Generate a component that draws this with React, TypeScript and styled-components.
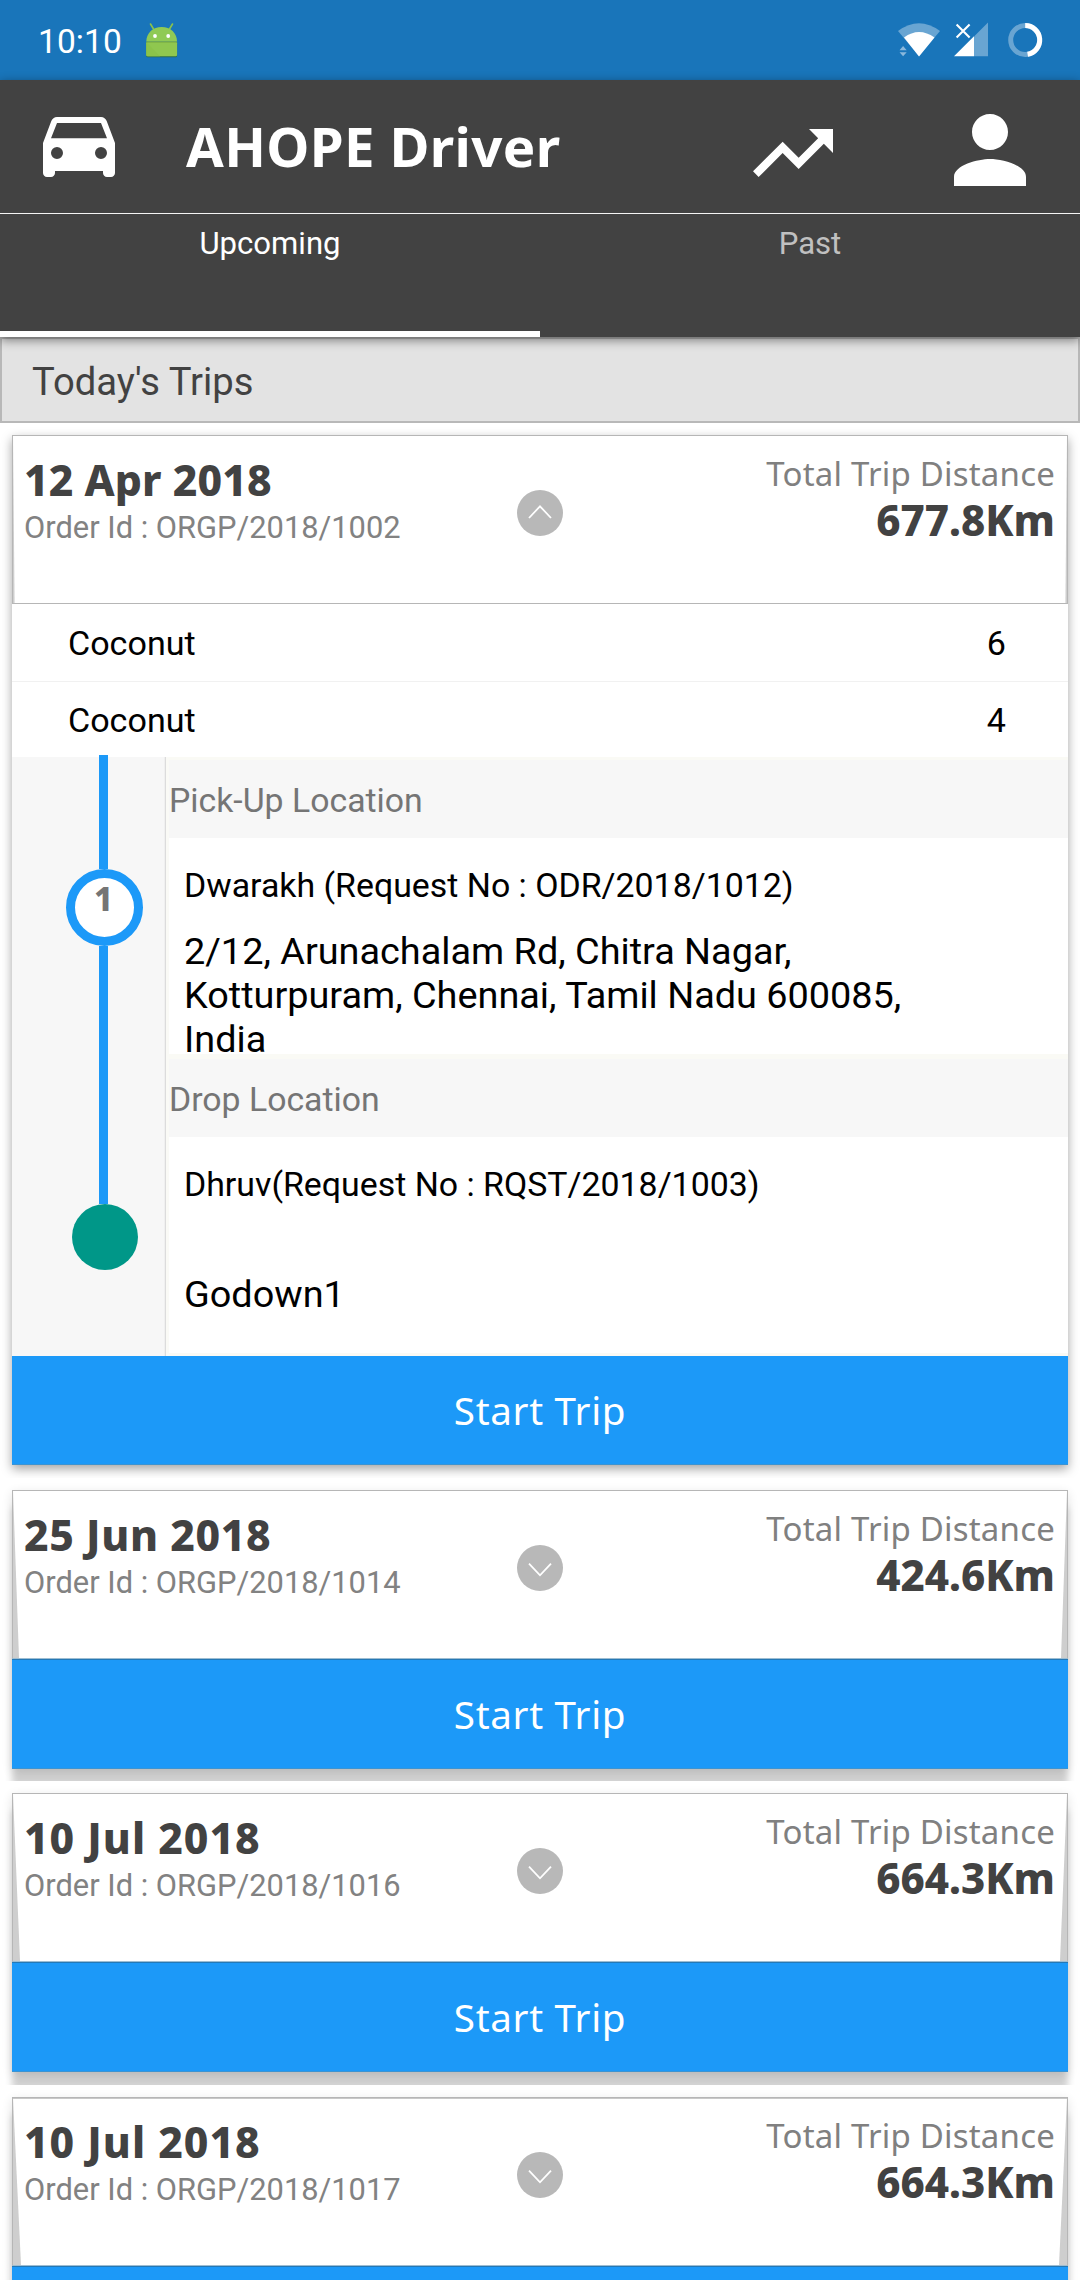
import React from "react";
import styled, { createGlobalStyle } from "styled-components";

const BLUE = "#1c99f8";
const DARK = "#424242";
const ROBOTO = `Roboto, "Liberation Sans", sans-serif`;
const HUMANIST = `"Noto Sans", "Open Sans", sans-serif`;

const GlobalStyle = createGlobalStyle`
  * { box-sizing: border-box; }
  body { margin: 0; background: #fff; font-family: ${ROBOTO}; }
  svg { display: block; flex: none; }
`;

const Screen = styled.div`
  width: 1080px;
  height: 2280px;
  overflow: hidden;
  background: #fff;
  display: flex;
  flex-direction: column;
`;

/* ---------- status bar ---------- */

const StatusBar = styled.div`
  flex: none;
  height: 80px;
  background: #1975ba;
  display: flex;
  align-items: flex-start;
  padding: 22px 37px 0 38px;
`;

const Clock = styled.span`
  color: #fff;
  font-size: 33.5px;
  line-height: 40px;
  letter-spacing: 0.1px;
  margin-right: 23px;
`;

const StatusIcons = styled.div`
  margin-left: auto;
  display: flex;
  gap: 14px;
`;

const RingSlot = styled.span`
  margin-left: 6px;
`;

/* ---------- app header ---------- */

const AppTop = styled.header`
  flex: none;
  position: relative;
  z-index: 1;
  background: ${DARK};
  box-shadow: 0 3px 10px rgba(0, 0, 0, 0.48);
`;

const Toolbar = styled.div`
  height: 134px;
  border-bottom: 1px solid #f4f4f4;
  display: flex;
  align-items: flex-start;
  padding: 0 36px 0 43px;
`;

const IconSlot = styled.span<{ $top: number; $left?: string }>`
  padding-top: ${(p) => p.$top}px;
  margin-left: ${(p) => p.$left ?? "0"};
`;

const Title = styled.h1`
  margin: 0 0 0 71px;
  color: #fff;
  font: 700 54.6px/133px ${HUMANIST};
  letter-spacing: 0.35px;
  white-space: nowrap;
`;

const Tabs = styled.nav`
  display: grid;
  grid-template-columns: 1fr 1fr;
  height: 123px;
`;

const Tab = styled.div<{ $active?: boolean }>`
  text-align: center;
  font-size: 31.1px;
  line-height: 59px;
  color: ${(p) => (p.$active ? "#fff" : "#c0c0c0")};
  border-bottom: 6px solid ${(p) => (p.$active ? "#fff" : "transparent")};
`;

const SectionTitle = styled.h2`
  flex: none;
  margin: 0;
  height: 86px;
  border: 2px solid #b8b8b8;
  background: #e3e3e3;
  color: ${DARK};
  font: 400 38.2px/82px ${ROBOTO};
  padding: 2px 0 0 30px;
`;

/* ---------- trip cards ---------- */

const CardSlot = styled.div<{ $tail: number }>`
  flex: none;
  padding: 12px 12px ${(p) => p.$tail}px;
  overflow: hidden;
`;

const Card = styled.article<{ $deep: boolean }>`
  background: #fff;
  box-shadow: ${(p) =>
    p.$deep
      ? "0 3px 10px rgba(0,0,0,.12), 0 18px 7px rgba(0,0,0,.18)"
      : "0 4px 10px rgba(0,0,0,.36)"};
`;

const CardHead = styled.div<{ $wedge: number; $open: boolean; $topLine: number }>`
  position: relative;
  height: 169px;
  border: 1px solid #b6b6b6;
  border-bottom-color: ${(p) => (p.$open ? "#b6b6b6" : "#9dbdd2")};
  box-shadow: inset 0 ${(p) => p.$topLine}px #c8c8c8;
  display: grid;
  grid-template-columns: 1fr 46px 1fr;
  padding: 0 12px 0 11px;

  &::before,
  &::after {
    content: "";
    position: absolute;
    top: 0;
    bottom: 0;
    width: ${(p) => p.$wedge}px;
    background: #cecece;
  }
  &::before {
    left: 0;
    clip-path: polygon(0 0, 100% 100%, 0 100%);
  }
  &::after {
    right: 0;
    clip-path: polygon(100% 0, 100% 100%, 0 100%);
  }
`;

const HeadLeft = styled.div`
  padding-top: 21px;
`;

const HeadRight = styled.div`
  padding-top: 18px;
  text-align: right;
`;

const TripDate = styled.div<{ $track: number }>`
  font: 800 42.6px/44px ${HUMANIST};
  letter-spacing: ${(p) => p.$track}px;
  color: ${DARK};
  white-space: nowrap;
`;

const OrderId = styled.div`
  margin-top: 9px;
  font-size: 30.85px;
  line-height: 36px;
  color: #828282;
  white-space: nowrap;
`;

const DistanceLabel = styled.div`
  font: 400 33px/40px ${HUMANIST};
  letter-spacing: 0.2px;
  color: #808080;
  white-space: nowrap;
`;

const Distance = styled.div`
  margin-top: 4px;
  font: 800 42px/44px ${HUMANIST};
  color: ${DARK};
`;

const ToggleButton = styled.span`
  margin-top: 54px;
  width: 46px;
  height: 46px;
  border-radius: 50%;
  background: #b8b8b8;
`;

const StartButton = styled.div<{ $collapsed: boolean }>`
  height: ${(p) => (p.$collapsed ? 110 : 109)}px;
  background: ${BLUE};
  border-top: ${(p) => (p.$collapsed ? "1px solid #2478b6" : "0")};
  box-shadow: inset 0 -1px #3c94d2;
  color: #fff;
  font: 400 38.6px/109px ${HUMANIST};
  letter-spacing: 0.65px;
  text-align: center;
`;

const ProductRow = styled.div`
  display: flex;
  justify-content: space-between;
  height: 77px;
  padding: 1px 62px 0 56px;
  font-size: 34.1px;
  line-height: 76px;
  color: #000;

  & + & {
    height: 76px;
    box-shadow: inset 0 1px #f1f1f1;
  }
`;

/* ---------- route ---------- */

const Route = styled.div`
  display: grid;
  grid-template-columns: 154px 1fr;
  height: 599px;
`;

const Timeline = styled.div`
  display: flex;
  flex-direction: column;
  align-items: center;
  background: #f7f7f7;
  border-right: 1px solid #dcdcdc;
  padding-left: 32px;
  box-shadow: inset -1px 0 #f0f0f0;
`;

const Segment = styled.span<{ $length: number; $rise?: number }>`
  width: 9px;
  height: ${(p) => p.$length}px;
  margin-top: ${(p) => -(p.$rise ?? 0)}px;
  margin-right: 2px;
  background: ${BLUE};
`;

const StopNumber = styled.span`
  width: 77px;
  height: 77px;
  border: 9px solid ${BLUE};
  border-radius: 50%;
  background: #fff;
  color: #757575;
  font: 800 33px/41px ${HUMANIST};
  text-align: center;
  padding-right: 2px;
`;

const EndDot = styled.span`
  width: 66px;
  height: 66px;
  margin-left: 1px;
  border-radius: 50%;
  background: #009788;
`;

const Stops = styled.div`
  display: flex;
  flex-direction: column;
  border-left: 3px solid #fafaf6;
`;

const Stop = styled.section`
  border-top: 3px solid #fafaf5;
  border-bottom: 3px solid #fafaf5;

  & + & {
    border-top-width: 2px;
  }
`;

const StopTitle = styled.h3`
  margin: 0;
  height: 78px;
  background: #f7f7f7;
  color: #757575;
  font: 400 33.8px/78px ${ROBOTO};
  padding-top: 2px;
`;

const StopBody = styled.div`
  height: 216px;
  padding: 28px 0 0 15px;
  color: #000;
`;

const Requester = styled.div`
  font-size: 33.87px;
  line-height: 40px;
  white-space: nowrap;
`;

const Address = styled.div<{ $gap: number }>`
  margin-top: ${(p) => p.$gap}px;
  width: 740px;
  font-size: 37.85px;
  line-height: 44px;
`;

/* ---------- icons ---------- */

const Droid = () => (
  <svg width="34" height="36" viewBox="0 0 34 36">
    <path d="M5.500 2l3 5M27.500 2l-3 5" stroke="#8bc34a" strokeWidth="1.600" strokeLinecap="round" />
    <path d="M1.300 19.500C1.300 11 8 5 16.700 5S32 11 32 19.500z" fill="#8fca55" />
    <rect x="1.300" y="20" width="30.800" height="15.300" rx="1.500" fill="#33691e" opacity=".7" />
    <rect x="1.300" y="19.700" width="30.800" height="14.600" rx="1.500" fill="#8fc74f" />
    <path d="M1.300 20L15 34.300H2.500a1.200 1.200 0 0 1-1.200-1.200z" fill="#8bc34a" />
    <path d="M1.300 20h30.800" stroke="#78ab42" strokeWidth="1.200" />
    <ellipse cx="10" cy="14" rx="1.900" ry="2.100" fill="#fff" />
    <ellipse cx="23.200" cy="14" rx="1.900" ry="2.100" fill="#fff" />
  </svg>
);

const Wifi = () => (
  <svg width="42" height="36" viewBox="0 0 42 36">
    <path d="M0 9Q21-6.500 42 9L21 34z" fill="#fff" opacity=".35" />
    <path d="M6 15.500Q21 4.500 36.500 15.500L21 34.500z" fill="#fff" />
    <path d="M1.500 28.200h7.200L5.100 24zM1.500 30.200h7.200L5.100 34.300z" fill="#8ab8dc" />
  </svg>
);

const Signal = () => (
  <svg width="34" height="36" viewBox="0 0 34 36">
    <path d="M20 14.500L34 .5v33.700H20z" fill="#fff" opacity=".35" />
    <path d="M0 34.200L20 14.200v20z" fill="#fff" />
    <path d="M2.600 2.600l13 13M15.600 2.600l-13 13" stroke="#fff" strokeWidth="2.100" />
  </svg>
);

const BatteryRing = () => (
  <svg width="35" height="36" viewBox="0 0 35 36">
    <circle cx="17.200" cy="18" r="14.500" fill="none" stroke="#fff" strokeOpacity=".35" strokeWidth="5" />
    <path d="M17.200 3.500A14.500 14.500 0 0 1 19.600 32.300" fill="none" stroke="#fff" strokeWidth="5" />
  </svg>
);

const Car = () => (
  <svg width="72" height="60" viewBox="0 0 18 15" fill="#fff">
    <path
      fillRule="evenodd"
      d="M15.920 1.010C15.720.420 15.160 0 14.500 0h-11c-.660 0-1.210.420-1.420 1.010L0 6.500V14c0 .550.450 1 1 1h1c.550 0 1-.450 1-1v-.5h12v.5c0 .550.450 1 1 1h1c.550 0 1-.450 1-1V6.500zM3.500 10.500a1.500 1.500 0 1 1 0-3 1.500 1.500 0 0 1 0 3zm11 0a1.500 1.500 0 1 1 0-3 1.500 1.500 0 0 1 0 3zM2 5.300l1.500-3.800h11L16 5.300z"
    />
  </svg>
);

const TrendingUp = () => (
  <svg width="96" height="96" viewBox="0 0 24 24" fill="#fff">
    <path d="M16 6l2.290 2.290-4.880 4.880-4-4L2 16.590 3.410 18l6-6 4 4 6.300-6.290L22 12V6z" />
  </svg>
);

const Person = () => (
  <svg width="108" height="108" viewBox="0 0 24 24" fill="#fff">
    <path d="M12 12c2.210 0 4-1.790 4-4s-1.790-4-4-4-4 1.790-4 4 1.790 4 4 4zm0 2c-2.670 0-8 1.340-8 4v2h16v-2c0-2.660-5.330-4-8-4z" />
  </svg>
);

const Chevron = ({ up }: { up: boolean }) => (
  <svg width="46" height="46" viewBox="0 0 46 46" fill="none" stroke="#fff" strokeWidth="1.800">
    <path d={up ? "M12 28L23 16.300 34 28" : "M12 18.600L23 30.300 34 18.600"} />
  </svg>
);

/* ---------- data ---------- */

type Trip = {
  date: string;
  track: number;
  order: string;
  distance: string;
  wedge: number;
  tail: number;
  topLine?: number;
  open?: boolean;
  action?: string;
};

const products = [
  { name: "Coconut", count: 6 },
  { name: "Coconut", count: 4 },
];

const trips: Trip[] = [
  { date: "12 Apr 2018", track: 0.1, order: "ORGP/2018/1002", distance: "677.8Km", wedge: 1.6, tail: 13, open: true, action: "Start Trip" },
  { date: "25 Jun 2018", track: 0.6, order: "ORGP/2018/1014", distance: "424.6Km", wedge: 6, tail: 12, action: "Start Trip" },
  { date: "10 Jul 2018", track: 1, order: "ORGP/2018/1016", distance: "664.3Km", wedge: 7, tail: 13, action: "Start Trip" },
  { date: "10 Jul 2018", track: 1, order: "ORGP/2018/1017", distance: "664.3Km", wedge: 8, tail: 12, topLine: 1 },
];

const TripDetails = () => (
  <>
    {products.map((p) => (
      <ProductRow key={p.count}>
        <span>{p.name}</span>
        <span>{p.count}</span>
      </ProductRow>
    ))}
    <Route>
      <Timeline>
        <Segment $length={114} $rise={2} />
        <StopNumber>1</StopNumber>
        <Segment $length={258} />
        <EndDot />
      </Timeline>
      <Stops>
        <Stop>
          <StopTitle>Pick-Up Location</StopTitle>
          <StopBody>
            <Requester>Dwarakh (Request No : ODR/2018/1012)</Requester>
            <Address $gap={23}>
              2/12, Arunachalam Rd, Chitra Nagar,
              <br />
              Kotturpuram, Chennai, Tamil Nadu 600085,
              <br />
              India
            </Address>
          </StopBody>
        </Stop>
        <Stop>
          <StopTitle>Drop Location</StopTitle>
          <StopBody>
            <Requester>Dhruv(Request No : RQST/2018/1003)</Requester>
            <Address $gap={67}>Godown1</Address>
          </StopBody>
        </Stop>
      </Stops>
    </Route>
  </>
);

const TripCard = ({ trip }: { trip: Trip }) => {
  const open = Boolean(trip.open);
  return (
    <CardSlot $tail={trip.tail}>
      <Card $deep={!open}>
        <CardHead $wedge={trip.wedge} $open={open} $topLine={trip.topLine ?? 0}>
          <HeadLeft>
            <TripDate $track={trip.track}>{trip.date}</TripDate>
            <OrderId>Order Id : {trip.order}</OrderId>
          </HeadLeft>
          <ToggleButton>
            <Chevron up={open} />
          </ToggleButton>
          <HeadRight>
            <DistanceLabel>Total Trip Distance</DistanceLabel>
            <Distance>{trip.distance}</Distance>
          </HeadRight>
        </CardHead>
        {open && <TripDetails />}
        <StartButton $collapsed={!open}>{trip.action}</StartButton>
      </Card>
    </CardSlot>
  );
};

export default function App() {
  return (
    <Screen>
      <GlobalStyle />
      <StatusBar>
        <Clock>10:10</Clock>
        <Droid />
        <StatusIcons>
          <Wifi />
          <Signal />
          <RingSlot>
            <BatteryRing />
          </RingSlot>
        </StatusIcons>
      </StatusBar>
      <AppTop>
        <Toolbar>
          <IconSlot $top={37}>
            <Car />
          </IconSlot>
          <Title>AHOPE Driver</Title>
          <IconSlot $top={25} $left="auto">
            <TrendingUp />
          </IconSlot>
          <IconSlot $top={16} $left="95px">
            <Person />
          </IconSlot>
        </Toolbar>
        <Tabs>
          <Tab $active>Upcoming</Tab>
          <Tab>Past</Tab>
        </Tabs>
      </AppTop>
      <SectionTitle>Today's Trips</SectionTitle>
      {trips.map((t) => (
        <TripCard key={t.order} trip={t} />
      ))}
    </Screen>
  );
}
